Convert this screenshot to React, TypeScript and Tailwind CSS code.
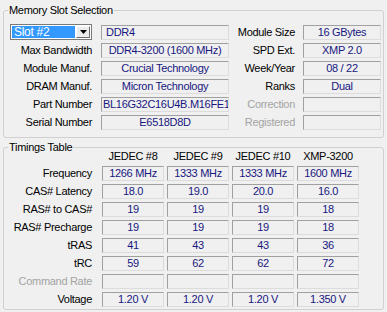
import React from "react";

type Row = { label: string; value: string; left?: boolean; label2: string; value2: string; dim?: boolean };

const slotRows: Row[] = [
  { label: "Max Bandwidth", value: "DDR4-3200 (1600 MHz)", label2: "SPD Ext.", value2: "XMP 2.0" },
  { label: "Module Manuf.", value: "Crucial Technology", label2: "Week/Year", value2: "08 / 22" },
  { label: "DRAM Manuf.", value: "Micron Technology", label2: "Ranks", value2: "Dual" },
  { label: "Part Number", value: "BL16G32C16U4B.M16FE1", left: true, label2: "Correction", value2: "", dim: true },
  { label: "Serial Number", value: "E6518D8D", label2: "Registered", value2: "", dim: true },
];

const cols = ["JEDEC #8", "JEDEC #9", "JEDEC #10", "XMP-3200"];

const timings: { label: string; values: string[]; dim?: boolean }[] = [
  { label: "Frequency", values: ["1266 MHz", "1333 MHz", "1333 MHz", "1600 MHz"] },
  { label: "CAS# Latency", values: ["18.0", "19.0", "20.0", "16.0"] },
  { label: "RAS# to CAS#", values: ["19", "19", "19", "18"] },
  { label: "RAS# Precharge", values: ["19", "19", "19", "18"] },
  { label: "tRAS", values: ["41", "43", "43", "36"] },
  { label: "tRC", values: ["59", "62", "62", "72"] },
  { label: "Command Rate", values: ["", "", "", ""], dim: true },
  { label: "Voltage", values: ["1.20 V", "1.20 V", "1.20 V", "1.350 V"] },
];

function Box({ children, className = "" }: { children?: React.ReactNode; className?: string }) {
  return (
    <div
      className={`flex h-[15px] shrink-0 items-center overflow-hidden whitespace-nowrap border border-[#a0a0a0] border-b-[#dcdcdc] border-r-[#dcdcdc] leading-none text-[#17177f] ${className}`}
    >
      {children}
    </div>
  );
}

function Label({ children, w, dim }: { children: React.ReactNode; w: string; dim?: boolean }) {
  return (
    <div className={`flex shrink-0 justify-end whitespace-nowrap ${w} ${dim ? "text-[#a3a3a3]" : ""}`}>
      {children}
    </div>
  );
}

function Group({ title, className = "", children }: { title: string; className?: string; children: React.ReactNode }) {
  return (
    <div className={`relative w-[381px] rounded-[3px] border border-[#d0d0d0] ${className}`}>
      {/* caption sits on the top edge */}
      <span className="absolute -top-[8px] left-[4px] h-[14px] bg-[#f0f0f0] px-[1px] leading-[14px] text-black">
        {title}
      </span>
      {children}
    </div>
  );
}

export default function App() {
  return (
    <div className="h-[312px] w-[387px] bg-[#f0f0f0] pl-[3px] pt-[10px] font-['Liberation_Sans',sans-serif] text-[11px] tracking-[-0.3px] text-black">
      <Group title="Memory Slot Selection" className="h-[128px] pt-[12px]">
        <div className="flex h-[18px] items-center">
          {/* slot combo */}
          <div className="ml-[6px] flex h-[16px] w-[82px] shrink-0 items-center border border-[#7a7a7a] bg-white p-[1px]">
            <div className="flex h-full flex-1 items-center bg-[#3399ff] pl-[2px] text-[12px] leading-none text-white">Slot #2</div>
            <div className="ml-[1px] flex h-full w-[14px] items-center justify-center border border-b-[#6d6d6d] border-l-white border-r-[#6d6d6d] border-t-white bg-[#ececec]">
              <svg width="7" height="4" viewBox="0 0 7 4">
                <path d="M0 0h7L3.5 4z" fill="#000" />
              </svg>
            </div>
          </div>
          <Box className="ml-[9px] w-[128px] pl-[4px]">DDR4</Box>
          <Label w="w-[66px]">Module Size</Label>
          <Box className="ml-[8px] w-[78px] justify-center">16 GBytes</Box>
        </div>
        {slotRows.map((r) => (
          <div key={r.label} className="flex h-[18px] items-center">
            <Label w="w-[88px]">{r.label}</Label>
            <Box className={`ml-[9px] w-[128px] ${r.left ? "pl-[1px]" : "justify-center"}`}>{r.value}</Box>
            <Label w="w-[66px]" dim={r.dim}>
              {r.label2}
            </Label>
            <Box className="ml-[8px] w-[78px] justify-center">{r.value2}</Box>
          </div>
        ))}
      </Group>

      <Group title="Timings Table" className="mt-[9px] h-[163px]">
        <div className="flex h-[16px] items-center">
          <div className="w-[88px] shrink-0" />
          <div className="ml-[10px] flex gap-[3px]">
            {cols.map((c) => (
              <div key={c} className="w-[62px] whitespace-nowrap text-center leading-[14px]">
                {c}
              </div>
            ))}
          </div>
        </div>
        {timings.map((t) => (
          <div key={t.label} className="flex h-[18px] items-center">
            <Label w="w-[88px]" dim={t.dim}>
              {t.label}
            </Label>
            <div className="ml-[10px] flex gap-[3px]">
              {t.values.map((v, i) => (
                <Box key={i} className="w-[62px] justify-center">
                  {v}
                </Box>
              ))}
            </div>
          </div>
        ))}
      </Group>
    </div>
  );
}
